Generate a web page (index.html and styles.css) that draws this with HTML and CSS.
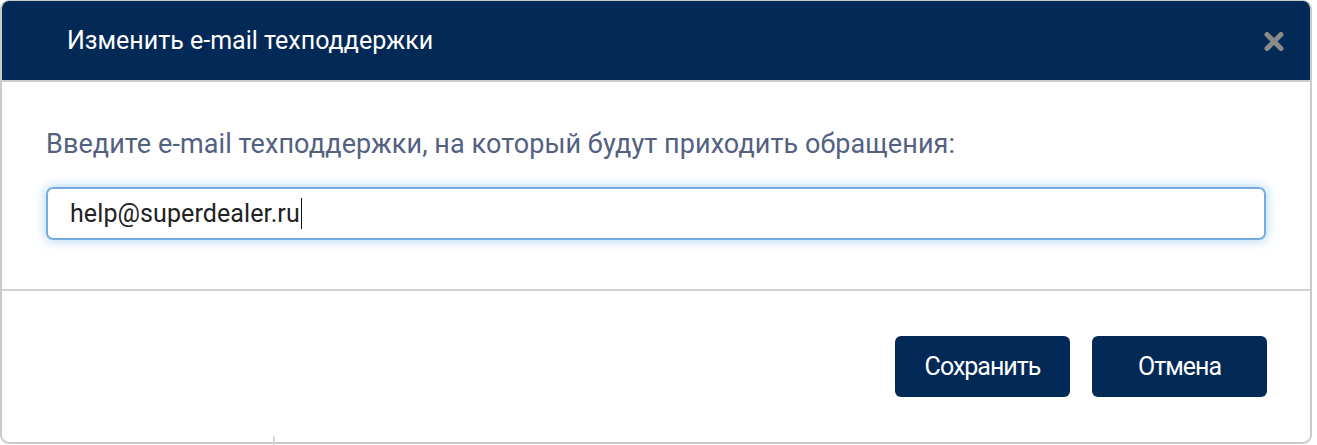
FILE: index.html
```html
<!DOCTYPE html>
<html lang="ru">
<head>
<meta charset="utf-8">
<title>Изменить e-mail техподдержки</title>
<link rel="stylesheet" href="styles.css">
</head>
<body>
<div class="page">
  <div class="modal">
    <div class="modal-header">
      <h4 class="modal-title">Изменить e-mail техподдержки</h4>
      <button class="close" type="button" aria-label="Закрыть">
        <svg width="20" height="19" viewBox="0 0 20 19"><path d="M3 2.5 L17 16.5 M17 2.5 L3 16.5" stroke="#8a8a8a" stroke-width="5" stroke-linecap="round"/></svg>
      </button>
    </div>
    <div class="modal-body">
      <label class="field-label" for="email">Введите e-mail техподдержки, на который будут приходить обращения:</label>
      <div class="input-box"><span class="input-text">help@superdealer.ru</span><span class="caret"></span></div>
    </div>
    <div class="modal-footer">
      <button class="btn" type="button">Сохранить</button>
      <button class="btn" type="button">Отмена</button>
    </div>
  </div>
  <div class="bg-mark"></div>
</div>
</body>
</html>
```

FILE: styles.css
```css
html, body {
  margin: 0;
  padding: 0;
  background: #ffffff;
}
body {
  font-family: Roboto, "Liberation Sans", sans-serif;
  width: 1317px;
  height: 445px;
  overflow: hidden;
}
.page {
  position: relative;
  width: 1317px;
  height: 445px;
}
.modal {
  width: 1308px;
  border: 2px solid #cacaca;
  border-top-width: 1px;
  border-radius: 9px;
  overflow: hidden;
  background: #fff;
  box-sizing: content-box;
}
.modal-header {
  height: 79px;
  background: #032956;
  border-bottom: 2px solid #c9ccd1;
  display: flex;
  align-items: center;
  justify-content: space-between;
  padding: 0 26px 0 65px;
}
.modal-title {
  margin: 0;
  color: #ffffff;
  font-size: 25px;
  font-weight: 400;
}
.close {
  border: 0;
  background: transparent;
  padding: 0;
  margin-top: 1px;
  width: 20px;
  height: 19px;
  display: flex;
}
.modal-body {
  padding: 44px 44px 49px 44px;
  border-bottom: 2px solid #d3d3d3;
}
.field-label {
  display: block;
  color: #536181;
  font-size: 27px;
  line-height: 36px;
  letter-spacing: 0.08px;
  margin-bottom: 25px;
}
.input-box {
  height: 49px;
  border: 2px solid #75abe0;
  border-radius: 7px;
  box-shadow: 0 0 12px rgba(102, 175, 233, 0.6);
  display: flex;
  align-items: center;
  padding-left: 22px;
}
.input-text {
  font-size: 25px;
  letter-spacing: 0.1px;
  color: #222;
}
.caret {
  width: 1px;
  height: 31px;
  background: #111;
  margin-left: 1px;
}
.modal-footer {
  display: flex;
  justify-content: flex-end;
  gap: 22px;
  padding: 45px 43px 45px 44px;
}
.btn {
  width: 175px;
  height: 61px;
  border: 0;
  border-radius: 6px;
  background: #032956;
  color: #fff;
  font-family: Roboto, "Liberation Sans", sans-serif;
  font-size: 25px;
  font-weight: 400;
  letter-spacing: -1px;
}
.bg-mark {
  position: absolute;
  left: 273px;
  top: 436px;
  width: 2px;
  height: 9px;
  background: #d6d6d6;
}
```
